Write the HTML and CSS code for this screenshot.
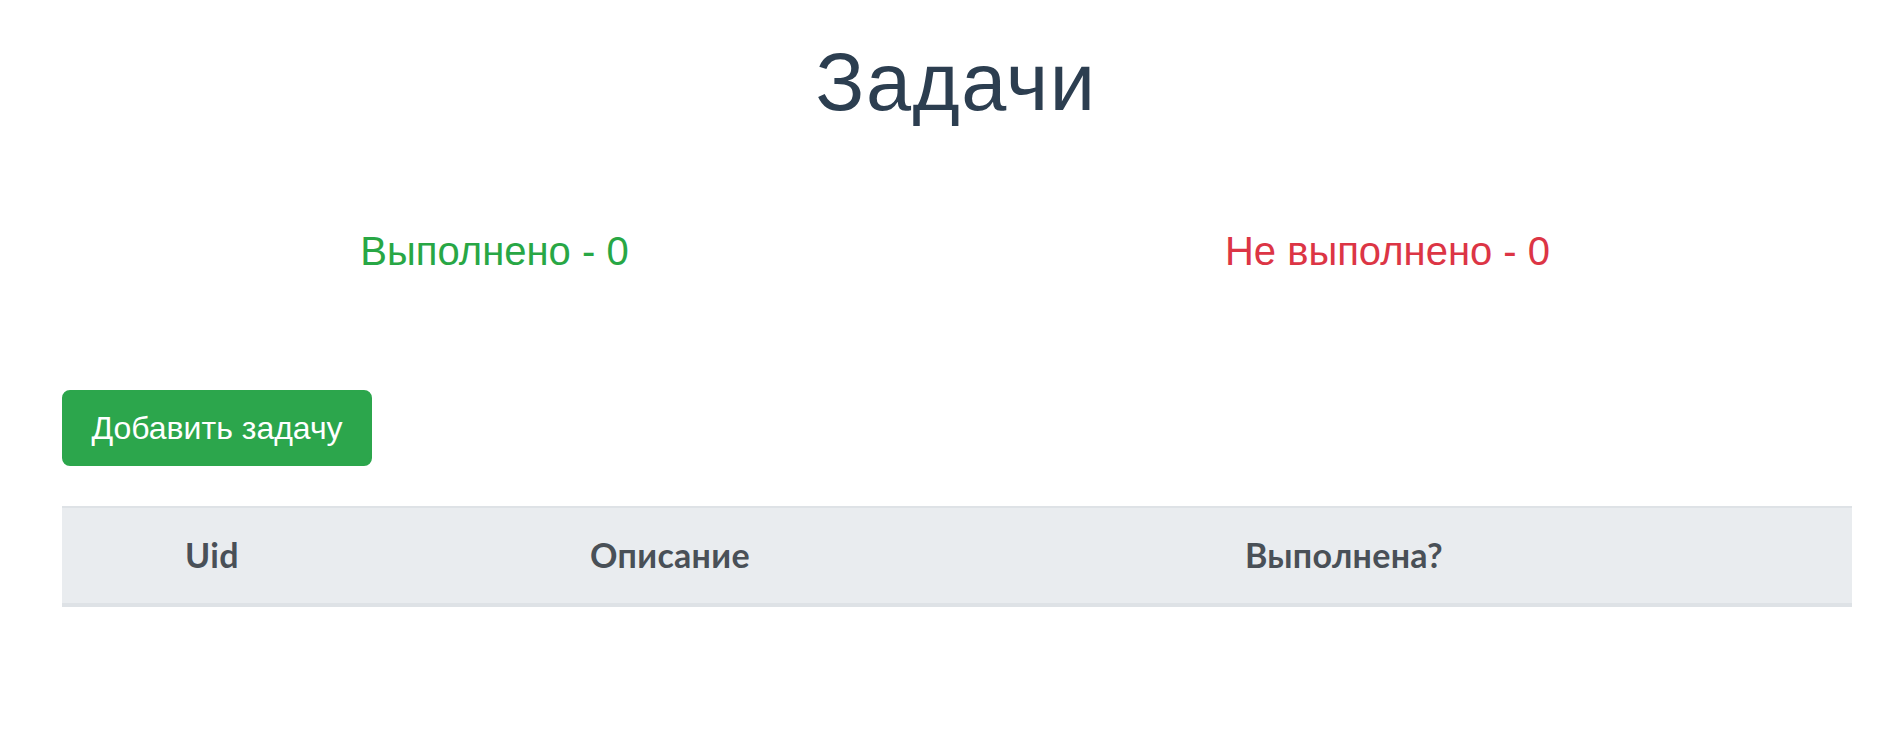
FILE: index.html
```html
<!DOCTYPE html>
<html lang="ru">
<head>
<meta charset="utf-8">
<title>Задачи</title>
<link rel="stylesheet" href="styles.css">
</head>
<body>
<div class="app">
  <h1 class="title">Задачи</h1>
  <div class="stats">
    <div class="stat stat-done">Выполнено - 0</div>
    <div class="stat stat-undone">Не выполнено - 0</div>
  </div>
  <div class="toolbar">
    <button class="btn-add" type="button">Добавить задачу</button>
  </div>
  <div class="table">
    <div class="thead">
      <div class="th col-uid">Uid</div>
      <div class="th col-desc">Описание</div>
      <div class="th col-done">Выполнена?</div>
      <div class="th col-act"></div>
    </div>
  </div>
</div>
</body>
</html>
```

FILE: styles.css
```css
html, body {
  margin: 0;
  padding: 0;
  background: #ffffff;
}

.app {
  font-family: "Liberation Sans", Arial, sans-serif;
  color: #2c3e50;
  text-align: center;
  padding-top: 34px;
}

.title {
  margin: 0;
  padding-left: 30px;
  font-size: 81px;
  letter-spacing: 1.5px;
  font-weight: 400;
  line-height: 96px;
  color: #2c3e50;
}

.stats {
  display: flex;
  margin: 91px 48px 0 48px;
}

.stat {
  flex: 1 1 0;
  font-size: 40px;
  line-height: 60px;
}

.stat-done {
  color: #28a745;
}

.stat-undone {
  color: #dc3545;
}

.toolbar {
  display: flex;
  margin: 109px 0 0 62px;
}

.btn-add {
  font-family: "Liberation Sans", Arial, sans-serif;
  font-size: 32px;
  line-height: 48px;
  color: #ffffff;
  background: #2ca64c;
  border: 2px solid #2ca64c;
  border-radius: 8px;
  padding: 12px 26px;
  width: 310px;
}

.table {
  margin: 40px 30px 0 62px;
}

.thead {
  display: grid;
  grid-template-columns: 300px 616px 732px 1fr;
  background: #e9ecef;
  border-top: 2px solid #dee2e6;
  border-bottom: 4px solid #dee2e6;
}

.th {
  font-family: Lato, "Open Sans", sans-serif;
  font-weight: 700;
  font-size: 34px;
  letter-spacing: 0.3px;
  line-height: 48px;
  color: #495057;
  padding: 23px 24px 24px 24px;
  text-align: center;
}
```
